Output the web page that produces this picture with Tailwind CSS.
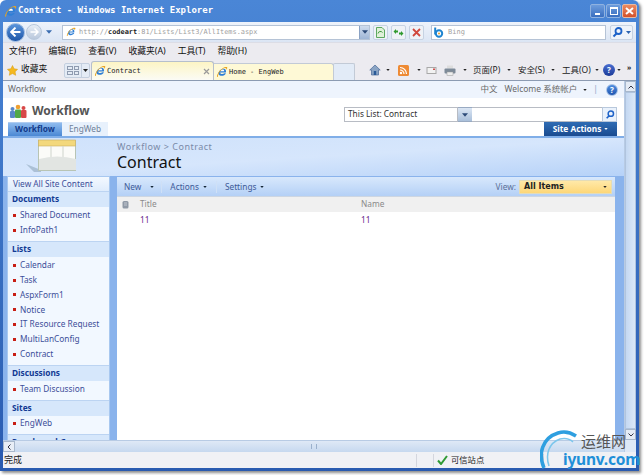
<!DOCTYPE html>
<html>
<head>
<meta charset="utf-8">
<script src="https://cdn.jsdelivr.net/npm/@tailwindcss/browser@4"></script>
</head>
<body class="m-0 bg-white">
<svg width="0" height="0" class="absolute">
  <defs>
    <symbol id="ie" viewBox="0 0 16 16">
      <path d="M3.2 9.2C4 5.2 8 3 10.8 3.6c2.2.5 3 2.4 2.4 5H5.6c.1 2.3 3.4 3 5.6 1.1h2c-1.500 3.200-5.400 4.200-8 2.900C3.600 11.800 3 10.600 3.200 9.200z" fill="#2f7fd6"/>
      <path d="M5.700 7h5.200c0-2-1-2.300-2.200-2.300-1.300 0-2.500.9-3 2.300z" fill="#fff"/>
      <path d="M1.500 14.500C.5 12.500 4 6 8.500 3.200 11.500 1.300 14.500.8 15 2c.3.8-.5 2-1.500 3C13.800 3.600 13.500 2.700 12 2.600 8 2.700 2.500 10 2.700 13.500c-.1.500-.6 1.200-1.200 1z" fill="#e8a420"/>
    </symbol>
    <symbol id="caret" viewBox="0 0 5 3"><path d="M0 0h5L2.500 3z" fill="currentColor"/></symbol>
  </defs>
</svg>
<div class="relative w-[644px] h-[475px] overflow-hidden bg-white font-['Noto_Sans','Noto_Sans_CJK_SC',sans-serif]">
  <!-- window -->
  <div class="w-[639px] h-[471px] flex flex-col rounded-t-[6px] bg-gradient-to-b from-[#4a86d6] to-[#2a5bb0] px-[3px] pb-[3px] shadow-[2px_2px_3px_rgba(0,0,0,0.45)]">
    <!-- title -->
    <div class="h-[22px] flex items-center shrink-0 pl-[1px] pr-[1px]">
      <svg class="w-[13px] h-[13px] mr-[1px]"><use href="#ie"/></svg>
      <span class="font-['DejaVu_Sans_Mono',monospace] text-[9px] font-bold text-white">Contract - Windows Internet Explorer</span>
      <div class="ml-auto flex gap-[1px] mr-[-2px]">
        <div class="w-[15px] h-[14px] rounded-[2px] border border-[#8fb2e0] bg-gradient-to-b from-[#6d9cdc] to-[#3a6fc0] flex items-end justify-center pb-[2px]"><div class="w-[5px] h-[2px] bg-white"></div></div>
        <div class="w-[15px] h-[14px] rounded-[2px] border border-[#8fb2e0] bg-gradient-to-b from-[#6d9cdc] to-[#3a6fc0] flex items-center justify-center"><div class="w-[8px] h-[8px] border border-white border-t-2"></div></div>
        <div class="w-[15px] h-[14px] rounded-[2px] border border-[#e8b8a0] bg-gradient-to-b from-[#ec8a60] to-[#d2502a] flex items-center justify-center">
          <svg width="9" height="8" viewBox="0 0 9 8"><path d="M1 1l7 6M8 1L1 7" stroke="#fff" stroke-width="2"/></svg>
        </div>
      </div>
    </div>
    <!-- chrome -->
    <div class="flex-1 flex flex-col min-h-0 bg-[#eeeef3]">
      <!-- address row -->
      <div class="h-[20px] shrink-0 flex items-center bg-gradient-to-b from-[#eef3fb] to-[#dbe5f4]">
        <div class="w-[19px] h-[19px] ml-[3px] rounded-full bg-gradient-to-b from-[#5b95dc] to-[#1d56a8] border border-[#9bb8de] flex items-center justify-center shrink-0">
          <svg width="11" height="10" viewBox="0 0 10 9"><path d="M5 .5L1 4.500l4 4M1.500 4.500H9.500" stroke="#fff" stroke-width="1.800" fill="none"/></svg>
        </div>
        <div class="w-[16px] h-[16px] ml-[1px] rounded-full bg-gradient-to-b from-[#e8eef6] to-[#b9c8dc] border border-[#b8c8dc] flex items-center justify-center shrink-0">
          <svg width="9" height="8" viewBox="0 0 10 9"><path d="M5 .5l4 4-4 4M8.500 4.500H.5" stroke="#fff" stroke-width="1.600" fill="none"/></svg>
        </div>
        <svg class="w-[6px] h-[4px] ml-[4px] text-[#3a6cb0] shrink-0"><use href="#caret"/></svg>
        <div class="ml-[10px] w-[308px] h-[15px] bg-white border border-[#b5c3d6] flex items-center pl-[3px] shrink-0">
          <svg class="w-[10px] h-[10px] mr-[3px]"><use href="#ie"/></svg>
          <span class="font-['DejaVu_Sans_Mono',monospace] text-[6.900px] text-[#a0a0a0]">http://<b class="text-[#222]">codeart</b>:81/Lists/List3/AllItems.aspx</span>
          <div class="ml-auto w-[10px] h-[13px] bg-gradient-to-b from-[#cfdcee] to-[#9fb6d6] border-l border-[#8aa2c4] flex items-center justify-center text-[#2c4a78]"><svg class="w-[6px] h-[4px]"><use href="#caret"/></svg></div>
        </div>
        <div class="ml-[3px] w-[15px] h-[15px] rounded-[2px] border border-[#c6d2e2] bg-[#eef2f7] flex items-center justify-center shrink-0">
          <svg width="9" height="11" viewBox="0 0 9 11"><path d="M.5.5h5.500l2.500 2.500v7.500H.5z" fill="#dff0d8" stroke="#5da860"/><path d="M2 6.500a2.500 2.500 0 0 1 4.500-1" stroke="#3c9a3c" fill="none"/></svg>
        </div>
        <div class="ml-[3px] w-[15px] h-[15px] rounded-[2px] border border-[#c6d2e2] bg-[#eef2f7] flex items-center justify-center shrink-0">
          <svg width="11" height="9" viewBox="0 0 11 9"><path d="M.5 3.500L3 1v1.500h2v2H3V6zM10.500 5.500L8 8V6.500H6v-2h2V3z" fill="#2f9a2f"/></svg>
        </div>
        <div class="ml-[3px] w-[15px] h-[15px] rounded-[2px] border border-[#c6d2e2] bg-[#eef2f7] flex items-center justify-center shrink-0">
          <svg width="9" height="9" viewBox="0 0 9 9"><path d="M1 1l7 7M8 1L1 8" stroke="#d0473c" stroke-width="1.800"/></svg>
        </div>
        <div class="ml-[7px] w-[175px] h-[15px] bg-white border border-[#b5c3d6] flex items-center pl-[2px] shrink-0">
          <svg width="13" height="11" viewBox="0 0 13 11" class="mr-[1px]"><path d="M1.200.5v7" stroke="#1e84d0" stroke-width="2"/><circle cx="5" cy="6.500" r="3.200" fill="none" stroke="#1e84d0" stroke-width="2"/><circle cx="5" cy="6.500" r="1" fill="#f0a020"/></svg>
          <span class="font-['DejaVu_Sans_Mono',monospace] text-[7px] text-[#a0a0a0]">Bing</span>
        </div>
        <div class="ml-[4px] w-[23px] h-[15px] rounded-[2px] border border-[#c6d2e2] bg-[#eef3fa] flex items-center shrink-0">
          <svg width="13" height="12" viewBox="0 0 12 12"><circle cx="7" cy="5" r="3" fill="none" stroke="#1d62c8" stroke-width="1.800"/><path d="M5 7.500L2 10.500" stroke="#1d62c8" stroke-width="2"/></svg>
          <svg class="w-[5px] h-[3px] ml-[2px] text-[#2a62b0]"><use href="#caret"/></svg>
        </div>
      </div>
      <!-- menu -->
      <div class="h-[18px] shrink-0 flex items-center pl-[6px] gap-[12px] text-[8.800px] text-[#111] bg-[#ecebf0] border-t border-[#dcdde6]">
        <span>文件(F)</span><span>编辑(E)</span><span>查看(V)</span><span>收藏夹(A)</span><span>工具(T)</span><span>帮助(H)</span>
      </div>
      <!-- tabs -->
      <div class="h-[20px] shrink-0 flex items-end bg-[#ecebf0]">
        <div class="self-center flex items-center w-[60px] pl-[4px]">
          <svg width="11" height="11" viewBox="0 0 11 11" class="mr-[3px]"><path d="M5.500.5l1.600 3.300 3.500.5-2.500 2.500.6 3.500-3.200-1.700-3.200 1.700.6-3.500L.4 4.300l3.500-.5z" fill="#f5b820" stroke="#d49a10" stroke-width=".5"/></svg>
          <span class="text-[8.800px] text-[#111]">收藏夹</span>
        </div>
        <div class="self-center h-[15px] w-[26px] ml-[1px] flex rounded-[2px] border border-[#c4cfdf] bg-[#e4ebf5]">
          <div class="w-[16px] grid grid-cols-2 gap-[1px] p-[2px]"><i class="border border-[#8f9bb0]"></i><i class="border border-[#8f9bb0]"></i><i class="border border-[#8f9bb0]"></i><i class="border border-[#8f9bb0]"></i></div>
          <div class="flex-1 border-l border-[#c4cfdf] flex items-center justify-center text-[#222]"><svg class="w-[5px] h-[3px]"><use href="#caret"/></svg></div>
        </div>
        <div class="ml-[1px] w-[123px] h-[19px] flex items-center rounded-t-[3px] border border-b-0 border-[#b6bfcc] bg-gradient-to-b from-[#fdf5c4] to-[#fbfbf5] pl-[2px] pr-[3px]">
          <svg class="w-[12px] h-[12px] mr-[1px]"><use href="#ie"/></svg>
          <span class="font-['DejaVu_Sans_Mono',monospace] text-[7px] text-[#222]">Contract</span>
          <svg width="7" height="7" viewBox="0 0 7 7" class="ml-auto"><path d="M1 1l5 5M6 1L1 6" stroke="#9a9a9a" stroke-width="1.200"/></svg>
        </div>
        <div class="w-[120px] h-[17px] flex items-center rounded-tr-[3px] border border-l-0 border-b-0 border-[#c2cad6] bg-[#fef9d6] pl-[2px]">
          <svg class="w-[12px] h-[12px] mr-[1px]"><use href="#ie"/></svg>
          <span class="font-['DejaVu_Sans_Mono',monospace] text-[7px] text-[#222]">Home - EngWeb</span>
        </div>
        <div class="w-[22px] h-[17px] rounded-t-[2px] border border-b-0 border-[#c2cad6] bg-[#e2ebf7] ml-[-1px]"></div>
        <div class="flex-1 self-center flex items-center text-[8.500px] text-[#222] pl-[14px]">
          <svg width="12" height="12" viewBox="0 0 12 12" class="mr-[5px] shrink-0"><path d="M6 1L.8 6H2.500v5h7V6h1.700z" fill="#8aa4c4" stroke="#4a6a98" stroke-width=".7"/><rect x="4.800" y="7" width="2.400" height="4" fill="#2a5a98"/></svg>
          <svg class="w-[4px] h-[2px] mr-[8px] shrink-0"><use href="#caret"/></svg>
          <svg width="11" height="11" viewBox="0 0 11 11" class="mr-[8px] shrink-0"><rect width="11" height="11" rx="1.500" fill="#ee8a33"/><circle cx="3" cy="8" r="1.200" fill="#fff"/><path d="M2 5a4 4 0 0 1 4 4M2 2.500A6.500 6.500 0 0 1 8.500 9" stroke="#fff" fill="none" stroke-width="1.200"/></svg>
          <svg class="w-[4px] h-[2px] mr-[5px] shrink-0"><use href="#caret"/></svg>
          <svg width="11" height="7" viewBox="0 0 10 7" class="mr-[7px] shrink-0"><rect x=".5" y=".5" width="9" height="6" fill="#f2f2f2" stroke="#a8a8a8"/><rect x="6.500" y="1.500" width="2" height="1.500" fill="#d05050"/></svg>
          <svg width="12" height="11" viewBox="0 0 12 11" class="mr-[7px] shrink-0"><rect x="3" y=".5" width="6" height="3" fill="#ddd"/><rect x=".5" y="3.500" width="11" height="5" rx="1" fill="#7d8a98"/><rect x="3" y="7" width="6" height="3.500" fill="#eee" stroke="#999" stroke-width=".5"/></svg>
          <svg class="w-[4px] h-[2px] mr-[6px] shrink-0"><use href="#caret"/></svg>
          <span class="w-[29px] whitespace-nowrap shrink-0">页面(P)</span><svg class="w-[4px] h-[2px] ml-[5px] mr-[7px] shrink-0"><use href="#caret"/></svg>
          <span class="w-[29px] whitespace-nowrap shrink-0">安全(S)</span><svg class="w-[4px] h-[2px] ml-[4px] mr-[7px] shrink-0"><use href="#caret"/></svg>
          <span class="w-[29px] whitespace-nowrap shrink-0">工具(O)</span><svg class="w-[4px] h-[2px] ml-[4px] mr-[4px] shrink-0"><use href="#caret"/></svg>
          <span class="w-[12px] h-[12px] rounded-full bg-gradient-to-b from-[#4a6ed0] to-[#1c3a98] text-white text-[8px] leading-[12px] text-center font-bold shrink-0">?</span>
          <svg class="w-[4px] h-[2px] ml-[2px] mr-[6px] shrink-0"><use href="#caret"/></svg>
          <span class="self-start text-[7px] leading-[7px] font-bold">»</span>
        </div>
      </div>
      <!-- page + scrollbar -->
      <div class="flex-1 min-h-0 flex border-t border-[#8c9bb2]">
        <div class="flex-1 min-w-0 flex flex-col bg-white overflow-hidden">
          <!-- global bar -->
          <div class="h-[17px] shrink-0 flex items-center bg-[#eef4fd] pl-[5px] pr-[6px] text-[8.500px] text-[#6a6a6a]">
            <span>Workflow</span>
            <span class="ml-auto mr-[7px]">中文</span>
            <span>Welcome 系统帐户</span>
            <svg class="w-[4px] h-[2px] ml-[6px] text-[#222]"><use href="#caret"/></svg>
            <span class="ml-[6px] mr-[8px] text-[#8ea8c8]">|</span>
            <span class="w-[12px] h-[12px] rounded-full bg-gradient-to-b from-[#4f8ee0] to-[#1f55b0] border border-[#a9c4e8] text-white text-[8px] leading-[10px] text-center font-bold">?</span>
          </div>
          <!-- site title -->
          <div class="h-[38px] shrink-0 flex pl-[5px] pr-[7px] relative">
            <div class="flex flex-col">
              <div class="flex items-center h-[24px] pt-[2px] pl-[1px]">
                <svg width="18" height="14" viewBox="0 0 18 14" class="mr-[5px]">
                  <circle cx="3.500" cy="5" r="2" fill="#5a88c8"/><rect x="1" y="7" width="5" height="7" rx="1" fill="#5a88c8"/>
                  <circle cx="14.500" cy="4" r="2" fill="#d84848"/><rect x="12" y="6" width="5.500" height="8" rx="1" fill="#d84848"/>
                  <circle cx="9" cy="3" r="2.300" fill="#f0a030"/><rect x="6" y="5.500" width="6" height="8.500" rx="1" fill="#52a848"/>
                </svg>
                <span class="font-bold text-[12px] text-[#555]">Workflow</span>
              </div>
              <div class="flex h-[14px]">
                <div class="w-[54px] flex items-center justify-center bg-gradient-to-b from-[#8fbbee] to-[#4a88d4] text-[8.300px] font-bold text-[#123a8a] border-t border-[#b0ccf0]">Workflow</div>
                <div class="w-[46px] flex items-center justify-center bg-[#e8f1fc] text-[8.300px] text-[#6e7f98]">EngWeb</div>
              </div>
            </div>
            <div class="ml-auto flex flex-col items-end w-[273px]">
              <div class="mt-[9px] h-[15px] w-[273px] flex">
                <div class="flex items-center w-[114px] border border-[#b8bcc4] bg-white pl-[3px] text-[8.300px] text-[#333]">This List: Contract</div>
                <div class="w-[14px] h-[15px] bg-gradient-to-b from-[#dbe6f4] to-[#a9bfda] border-y border-[#99aac2] flex items-center justify-center text-[#2c4a78]"><svg class="w-[6px] h-[4px]"><use href="#caret"/></svg></div>
                <div class="flex-1 border-y border-[#b8bcc4]"></div>
                <div class="w-[15px] bg-[#eaf2fc] border border-[#b8c8dc] flex items-center justify-center">
                  <svg width="10" height="11" viewBox="0 0 12 12"><circle cx="7" cy="5" r="3.200" fill="none" stroke="#1d62c8" stroke-width="1.800"/><path d="M5 7.500L2 10.500" stroke="#1d62c8" stroke-width="2"/></svg>
                </div>
              </div>
              <div class="h-[14px] w-[73px] bg-gradient-to-b from-[#2f6cb4] to-[#1a4b90] text-white text-[8.300px] font-bold flex items-center justify-center">Site Actions<svg class="w-[4px] h-[2px] ml-[3px]"><use href="#caret"/></svg></div>
            </div>
          </div>
          <!-- body -->
          <div class="flex-1 min-h-0 flex flex-col border-t-2 border-[#80aee8] bg-[#8ab3ec] relative overflow-hidden">
            <div class="flex h-[38px] shrink-0 bg-gradient-to-br from-[#cfe2fb] via-[#d6e6fc] to-[#b6d2f8]">
              <div class="w-[114px] shrink-0 pl-[23px] pt-[1px]">
                <svg width="50" height="33" viewBox="0 0 50 33">
                  <path d="M0 25l15 6v2H8z" fill="#8fa6bc" opacity=".6"/>
                  <rect x="13.500" y="1.500" width="37" height="30" transform="translate(-1 0)" fill="#fbfbf8" stroke="#b8c4b4"/>
                  <rect x="12.500" y="1" width="37" height="6" fill="#f3d87c" stroke="#c9b060" stroke-width=".6"/>
                  <path d="M25 7v24M37 7v24" stroke="#cfd4cc"/>
                  <path d="M13 20q18-5 37 0v11H13z" fill="#e2e5e2"/>
                </svg>
              </div>
              <div class="pt-[3px]">
                <div class="text-[9px] leading-[12px] tracking-[0.5px] text-[#7a8aa8]">Workflow &gt; Contract</div>
                <div class="text-[16px] leading-[19px] text-[#111]">Contract</div>
              </div>
            </div>
            <div class="flex-1 min-h-0 flex pl-[4px] pr-[8px] gap-[6px]">
              <!-- left nav -->
              <div class="w-[103px] shrink-0 bg-[#f2f8ff] border border-[#a8c8f0] border-b-0 text-[8.300px] overflow-hidden">
                <div class="h-[14px] flex items-center pl-[5px] bg-gradient-to-b from-[#f4f9ff] to-[#dfecfc] text-[#3d4f9a]">View All Site Content</div>
                <div class="h-[16px] flex items-center pl-[4px] bg-[#d6e7fb] border-t border-[#bcd4f2] font-bold text-[#123a94]">Documents</div>
                <ul class="pb-[3px] pt-[1px]">
                  <li class="h-[15px] flex items-center pl-[5px] text-[#3d4f9a]"><i class="w-[3px] h-[3px] bg-[#c81e14] mr-[4px]"></i>Shared Document</li>
                  <li class="h-[15px] flex items-center pl-[5px] text-[#3d4f9a]"><i class="w-[3px] h-[3px] bg-[#c81e14] mr-[4px]"></i>InfoPath1</li>
                </ul>
                <div class="h-[16px] flex items-center pl-[4px] bg-[#d6e7fb] border-t border-[#bcd4f2] font-bold text-[#123a94]">Lists</div>
                <ul class="pb-[3px] pt-[1px]">
                  <li class="h-[14.800px] flex items-center pl-[5px] text-[#3d4f9a]"><i class="w-[3px] h-[3px] bg-[#c81e14] mr-[4px]"></i>Calendar</li>
                  <li class="h-[14.800px] flex items-center pl-[5px] text-[#3d4f9a]"><i class="w-[3px] h-[3px] bg-[#c81e14] mr-[4px]"></i>Task</li>
                  <li class="h-[14.800px] flex items-center pl-[5px] text-[#3d4f9a]"><i class="w-[3px] h-[3px] bg-[#c81e14] mr-[4px]"></i>AspxForm1</li>
                  <li class="h-[14.800px] flex items-center pl-[5px] text-[#3d4f9a]"><i class="w-[3px] h-[3px] bg-[#c81e14] mr-[4px]"></i>Notice</li>
                  <li class="h-[14.800px] flex items-center pl-[5px] text-[#3d4f9a]"><i class="w-[3px] h-[3px] bg-[#c81e14] mr-[4px]"></i>IT Resource Request</li>
                  <li class="h-[14.800px] flex items-center pl-[5px] text-[#3d4f9a]"><i class="w-[3px] h-[3px] bg-[#c81e14] mr-[4px]"></i>MultiLanConfig</li>
                  <li class="h-[14.800px] flex items-center pl-[5px] text-[#3d4f9a]"><i class="w-[3px] h-[3px] bg-[#c81e14] mr-[4px]"></i>Contract</li>
                </ul>
                <div class="h-[16px] flex items-center pl-[4px] bg-[#d6e7fb] border-t border-[#bcd4f2] font-bold text-[#123a94]">Discussions</div>
                <ul class="pb-[3px] pt-[1px]">
                  <li class="h-[15px] flex items-center pl-[5px] text-[#3d4f9a]"><i class="w-[3px] h-[3px] bg-[#c81e14] mr-[4px]"></i>Team Discussion</li>
                </ul>
                <div class="h-[16px] flex items-center pl-[4px] bg-[#d6e7fb] border-t border-[#bcd4f2] font-bold text-[#123a94]">Sites</div>
                <ul class="pb-[3px]">
                  <li class="h-[15px] flex items-center pl-[5px] text-[#3d4f9a]"><i class="w-[3px] h-[3px] bg-[#c81e14] mr-[4px]"></i>EngWeb</li>
                </ul>
                <div class="h-[16px] flex items-center pl-[4px] bg-[#d6e7fb] border-t border-[#bcd4f2] font-bold text-[#123a94]">People and Groups</div>
              </div>
              <!-- list -->
              <div class="flex-1 min-w-0 flex flex-col bg-white border border-[#8ab3ec] border-b-0">
                <div class="h-[20px] shrink-0 flex items-center bg-gradient-to-b from-[#d8e8fc] to-[#b4d0f6] text-[8.300px] text-[#3d5a98] pl-[7px] pr-[3px] pt-[1px] border-b border-[#cdd6e2]">
                  <span>New</span><svg class="w-[4px] h-[2px] ml-[9px] text-[#123]"><use href="#caret"/></svg>
                  <i class="w-px h-[12px] bg-[#cfe0f6] ml-[7px] mr-[8px]"></i>
                  <span>Actions</span><svg class="w-[4px] h-[2px] ml-[4px] text-[#123]"><use href="#caret"/></svg>
                  <i class="w-px h-[12px] bg-[#cfe0f6] ml-[9px] mr-[8px]"></i>
                  <span>Settings</span><svg class="w-[4px] h-[2px] ml-[4px] text-[#123]"><use href="#caret"/></svg>
                  <span class="ml-auto mr-[3px] text-[#5a6f98]">View:</span>
                  <div class="w-[93px] h-[14px] flex items-center justify-between bg-gradient-to-b from-[#ffe9a8] to-[#fdd777] border border-[#e4dcb8] pl-[4px] pr-[4px] font-['DejaVu_Sans',sans-serif] text-[8px] font-bold text-[#222]">All Items<svg class="w-[4px] h-[2px]"><use href="#caret"/></svg></div>
                </div>
                <div class="h-[15px] shrink-0 flex items-center bg-[#f0f0f0] text-[8.300px] text-[#8a8a8a]">
                  <div class="w-[23px] pl-[5px]"><svg width="7" height="9" viewBox="0 0 7 9"><rect x=".5" y="1" width="6" height="7.500" rx="1.500" fill="#8f99a6"/><path d="M2 3h3M2 5h3" stroke="#d8dde2" stroke-width=".7"/></svg></div>
                  <div class="w-[221px]">Title</div>
                  <div>Name</div>
                </div>
                <div class="h-[16px] shrink-0 flex items-center text-[8.300px] text-[#6a2a90]">
                  <div class="w-[23px]"></div>
                  <div class="w-[221px]">11</div>
                  <div>11</div>
                </div>
              </div>
            </div>
          </div>
          <!-- h scrollbar -->
          <div class="h-[12px] shrink-0 flex bg-gradient-to-b from-[#dfe9f6] to-[#c6d8ef] border-t border-[#b8cbe4] items-center">
            <div class="w-[12px] h-[11px] bg-[#e8eef6] border border-[#a8b8cc] flex items-center justify-center"><svg width="4" height="6" viewBox="0 0 4 6"><path d="M3.500.5L1 3l2.500 2.500" stroke="#334" fill="none"/></svg></div>
            <div class="flex-1 flex justify-center"><i class="w-[6px] h-[5px] border-x border-[#9ab0cc]"></i></div>
            <div class="w-[12px] h-[11px]"></div>
          </div>
        </div>
        <!-- v scrollbar -->
        <div class="w-[12px] shrink-0 flex flex-col bg-gradient-to-r from-[#cddcf0] to-[#e4edf8] border-l border-[#b8cbe4]">
          <div class="h-[11px] bg-[#e4ebf5] border border-[#a8b8cc] flex items-center justify-center"><svg width="6" height="4" viewBox="0 0 6 4"><path d="M.5 3.500L3 1l2.500 2.500" stroke="#334" fill="none"/></svg></div>
          <div class="flex-1 min-h-0 bg-gradient-to-r from-[#c4d8f2] to-[#dbe8f8] border border-[#b0c4de]"></div>
          <div class="h-[11px] bg-[#e4ebf5] border border-[#a8b8cc] flex items-center justify-center"><svg width="6" height="4" viewBox="0 0 6 4"><path d="M.5.5L3 3l2.500-2.500" stroke="#334" fill="none"/></svg></div>
          <div class="h-[12px] bg-[#dfe9f6]"></div>
        </div>
      </div>
      <!-- status -->
      <div class="h-[16px] shrink-0 flex items-center bg-[#f0f1f5] text-[9px] text-[#222] pl-[1px]">
        <span class="w-[412px]">完成</span>
        <i class="w-px h-[13px] bg-[#d4d6de] mr-[16px]"></i>
        <i class="w-px h-[13px] bg-[#d4d6de] mr-[3px]"></i>
        <svg width="11" height="10" viewBox="0 0 11 10" class="mr-[3px]"><path d="M1 5.500l3 3.500 6-8" stroke="#2f9a34" stroke-width="2" fill="none"/></svg>
        <span class="text-[8.300px]">可信站点</span>
        <i class="w-px h-[13px] bg-[#d4d6de] ml-[59px]"></i>
      </div>
    </div>
  </div>
  <!-- watermark -->
  <div class="absolute left-[540px] top-[428px] w-[104px] h-[47px]">
    <svg class="absolute left-0 top-0" width="44" height="47" viewBox="0 0 44 47">
      <path d="M4 40C-2 26 2 10 18 5c6-2 12-1 18 3" stroke="#2e9fe0" stroke-width="3.500" fill="none"/>
      <path d="M9 38C5 26 9 15 20 11c5-1 10 0 13 3" stroke="#7cc6ec" stroke-width="1.500" fill="none"/>
    </svg>
    <span class="absolute left-[41px] top-[4px] text-[15px] leading-[18px] text-[#555] font-['Noto_Sans_CJK_SC',sans-serif]">运维网</span>
    <span class="absolute left-[23px] top-[21px] text-[15.500px] leading-[20px] font-bold text-[#1f8fd8] font-['Noto_Sans',sans-serif] tracking-[-0.2px]">iyunv.com</span>
  </div>
</div>
</body>
</html>
